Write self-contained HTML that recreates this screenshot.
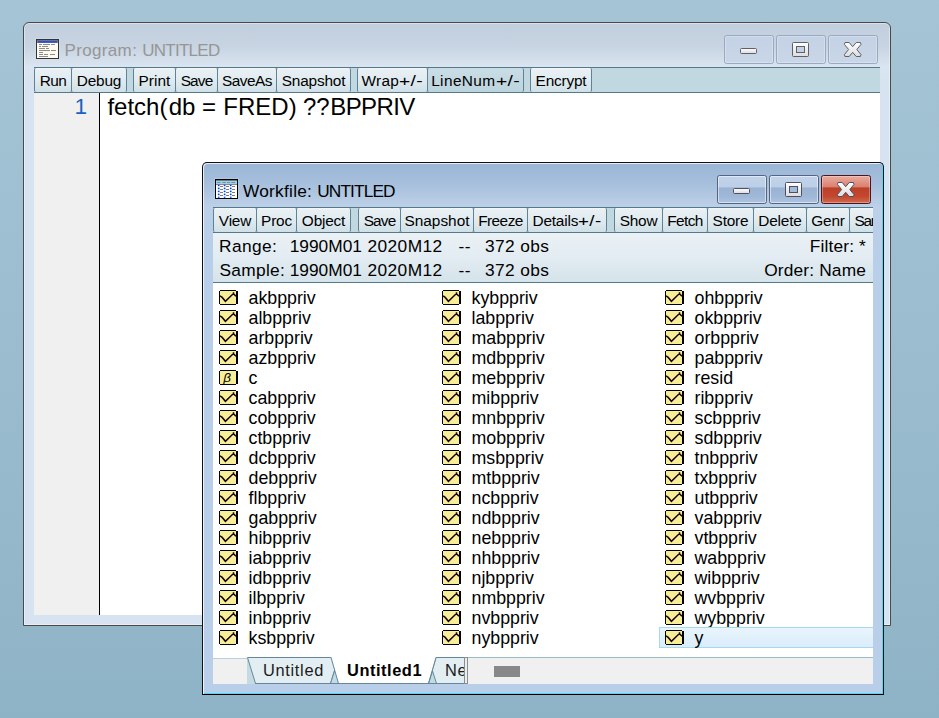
<!DOCTYPE html>
<html><head><meta charset="utf-8"><title>EViews</title>
<style>
html,body{margin:0;padding:0}
body{width:939px;height:718px;overflow:hidden;position:relative;background:linear-gradient(#a5c5d6,#8fb3c6);font-family:"Liberation Sans",Arial,sans-serif;color:#000}
.abs{position:absolute}
.win{position:absolute;box-sizing:border-box;border:1px solid #4a4a4a;border-radius:7px 7px 0 0}
#pw{left:23px;top:22px;width:868px;height:604px;border-radius:6px 6px 0 0;box-shadow:inset 0 0 0 1px rgba(255,255,255,.4);background:linear-gradient(#c1cedd 0,#c8d4e2 24px,#dae5f0 44px,#d7e3f0 60px,#d7e3f0 100%)}
#ww{left:202px;top:162px;width:682px;height:533px;border-color:#111;border-radius:5px 5px 0 0;box-shadow:inset 1px 1px 0 rgba(255,255,255,.75),inset -1px -1px 0 #4fd6f2;background:linear-gradient(#9ab5d6 0,#a6bfdc 20px,#bdd0e8 44px,#b9cfe9 60px,#b9cfe9 100%);border-bottom:1px solid #000}
.title{position:absolute;font-size:17px;letter-spacing:-0.22px;white-space:pre;line-height:20px}
.tbar{position:absolute;box-sizing:border-box;background:#c1d8e0;border-top:1px solid #527a8b;border-bottom:1px solid #527a8b;overflow:hidden}
.tb{position:absolute;box-sizing:border-box;border:1px solid #5d8395;border-top:none;border-bottom:none;border-radius:2px;background:linear-gradient(#f4f8fa,#e9f0f4 8%,#e0ebf0 50%,#d0e0e7);font-size:15.400px;letter-spacing:-.2px;line-height:25.400px;text-align:center;white-space:pre;margin-left:0}
.tb.on{background:linear-gradient(#c9dde5,#bcd4dd)}
.tb.clipl{text-align:left;padding-left:4.500px;letter-spacing:-1.300px}
.cb{position:absolute;box-sizing:border-box;border:1px solid #9aa8c3;border-radius:2.500px;background:linear-gradient(#c4d2e5,#c9d6e8);box-shadow:inset 0 0 0 1px rgba(255,255,255,.25)}
.cb.a{border-color:#566480;background:linear-gradient(#c0d3ea 0,#bccfe7 42%,#9bb2d2 43%,#a0b8d7 75%,#acc4e1 100%);box-shadow:inset 0 0 0 1px rgba(255,255,255,.5)}
.cb.x{border-color:#4b1622;background:linear-gradient(#eaac9e 0,#d97f6e 42%,#bc4028 43%,#c2472e 75%,#d06a4c 100%);box-shadow:inset 0 0 0 1px rgba(255,255,255,.3)}
.it{position:absolute;height:20px;width:214px;font-size:17.8px;line-height:20px;white-space:pre}
.it .ic{position:absolute;left:6px;top:2px}
.it span{position:absolute;left:35.5px;top:0}
.it.sel{box-sizing:border-box;border:1px solid #a6d8f0;background:linear-gradient(#e9f5fd,#d9edfa);margin-top:-1px;height:21px;width:216px}
.it.sel .ic{left:5px;top:2px}
.it.sel span{left:34.5px;top:0}
.info{position:absolute;font-size:17.33px;line-height:20px;white-space:pre}
.code span{position:relative}
.pm{display:inline-block;transform:scaleX(1.25);transform-origin:0 50%;letter-spacing:.3px;margin-right:5px}
.tab{position:absolute;font-size:16.4px;line-height:20px;white-space:pre}
</style></head><body>

<!-- Program window -->
<div class="win" id="pw"></div>
<svg class="abs" style="left:35px;top:38px" width="25" height="22" viewBox="-1 -1 25 22"><rect x="-0.500" y="-0.500" width="24" height="21" fill="none" stroke="#d3e1f0" stroke-opacity=".5"/><rect x="0.500" y="0.500" width="22" height="19" fill="#fffaf0" stroke="#333"/><rect x="1" y="1" width="21" height="1" fill="#7a7468"/><rect x="1" y="2" width="21" height="2" fill="#7f8088"/><rect x="2" y="2" width="19" height="1.700" fill="#1f4ff0"/><path d="M3 5.500h3M7 5.500h7M15 5.500h4M3 7.500h2M6 7.500h6M3 9.500h6M10 9.500h3M3 11.500h11M15 11.500h5M3 13.500h4M3 15.500h4M8 15.500h4M14 15.500h5M3 17.500h9" stroke="#8c8c8c" stroke-width="1"/></svg>
<div class="title" style="left:64.5px;top:41px;color:#969696"><span style="letter-spacing:.35px">Program: </span><span style="letter-spacing:-.75px">UNTITLED</span></div>
<div class="cb" style="left:724px;top:35px;width:50px;height:29px"></div>
<div class="cb" style="left:776px;top:35px;width:50px;height:29px"></div>
<div class="cb" style="left:828px;top:35px;width:50px;height:29px"></div>
<svg class="abs" style="left:724px;top:35px" width="154" height="29" viewBox="0 0 154 29">
<linearGradient id="g1" x1="0" y1="0" x2="0" y2="1"><stop offset="0" stop-color="#fff"/><stop offset="1" stop-color="#dcdcdc"/></linearGradient>
<rect x="16.500" y="13.500" width="16" height="5" rx="1" fill="url(#g1)" stroke="#5f6068"/>
<g transform="translate(52 0)"><rect x="16.500" y="7.500" width="16" height="14" rx="1" fill="url(#g1)" stroke="#5f6068"/><rect x="20.500" y="11.500" width="8" height="6" fill="#c3d1e4" stroke="#5f6068"/></g>
<g transform="translate(104 0)"><path d="M17 7.500H21.200L24.700 11.700L28.200 7.500H32.400L33 9.400L28.800 14.500L33 19.600L32.400 21.500H28.200L24.700 17.300L21.200 21.500H17L16.400 19.600L20.600 14.500L16.400 9.400Z" fill="url(#g1)" stroke="#5f6068" stroke-linejoin="round"/></g>
</svg>
<div class="tbar" style="left:34px;top:67px;width:846px;height:26px"></div>
<div class="tb" style="left:34px;width:38px;top:68px;height:24px"><span style="letter-spacing:-0.6px">Run</span></div>
<div class="tb" style="left:71px;width:56px;top:68px;height:24px">Debug</div>
<div class="tb" style="left:133px;width:43px;top:68px;height:24px"><span style="letter-spacing:0.05px">Print</span></div>
<div class="tb" style="left:175px;width:43px;top:68px;height:24px"><span style="letter-spacing:-0.85px">Save</span></div>
<div class="tb" style="left:217px;width:60px;top:68px;height:24px"><span style="letter-spacing:-0.5px">SaveAs</span></div>
<div class="tb" style="left:276px;width:75px;top:68px;height:24px">Snapshot</div>
<div class="tb" style="left:357px;width:71px;top:68px;height:24px"><span style="letter-spacing:0.3px">Wrap</span><span class="pm">+/-</span></div>
<div class="tb on" style="left:427px;width:97px;top:68px;height:24px"><span style="letter-spacing:0.4px">LineNum</span><span class="pm">+/-</span></div>
<div class="tb" style="left:530px;width:62px;top:68px;height:24px">Encrypt</div>
<div class="abs" style="left:34px;top:93px;width:846px;height:522px;background:#fff"></div>
<div class="abs" style="left:34px;top:93px;width:65px;height:522px;background:#f0f0f0"></div>
<div class="abs" style="left:99px;top:93px;width:1px;height:522px;background:#000"></div>
<div class="abs" style="left:34px;top:94px;width:53px;height:24px;line-height:25px;font-size:22.6px;color:#1b62c0;text-align:right">1</div>
<div class="abs code" style="left:106px;top:94px;height:26px;line-height:26px;font-size:24px;white-space:pre"><span style="left:1.4px">fetch(</span><span style="left:2.7px">db</span> <span style="left:2.6px">=</span> <span style="left:3.25px">FRED)</span> <span style="left:2.8px">??</span><span style="left:3.45px;letter-spacing:-.6px">BPPRIV</span></div>

<!-- Workfile window -->
<div class="win" id="ww"></div>
<svg class="abs" style="left:214px;top:178px" width="25" height="22" viewBox="-1 -1 25 22"><rect x="-0.500" y="-0.500" width="24" height="21" fill="none" stroke="#b9d3ee" stroke-opacity=".5"/><rect x="0.500" y="0.500" width="22" height="19" fill="#fffdf5" stroke="#000"/><rect x="1" y="1" width="21" height="1" fill="#807870"/><rect x="1" y="2" width="21" height="3" fill="#8fd8fa"/><rect x="1" y="5" width="21" height="1" fill="#8a8a8a"/><path d="M2 3.500h3.500M7.300 3.500h3.500M12 3.500h3M16.300 3.500h3.700" stroke="#8a8a8a"/><path d="M3.700 6v13M9.600 6v13M15.700 6v13" stroke="#bfe6ff" stroke-width="1.500"/><path d="M3.700 5.700v13M9.600 5.700v13M15.700 5.700v13" stroke="#0a3cff" stroke-width="1.600" stroke-dasharray="1.400 1.600"/><path d="M5 7.500h3M11 7.500h3M17 7.500h3M5 10.500h3M11 10.500h3M17 10.500h3M5 13.500h3M11 13.500h3M17 13.500h3M5 16.500h3M11 16.500h3M17 16.500h3" stroke="#7c7c7c"/></svg>
<div class="title" style="left:243px;top:181px;font-size:17.3px"><span style="letter-spacing:.25px">Workfile: </span><span style="letter-spacing:-.88px">UNTITLED</span></div>
<div class="cb a" style="left:717px;top:175px;width:50px;height:29px"></div>
<div class="cb a" style="left:769px;top:175px;width:50px;height:29px"></div>
<div class="cb x" style="left:821px;top:175px;width:50px;height:29px"></div>
<svg class="abs" style="left:717px;top:175px" width="154" height="29" viewBox="0 0 154 29">
<linearGradient id="g2" x1="0" y1="0" x2="0" y2="1"><stop offset="0" stop-color="#fff"/><stop offset="1" stop-color="#dcdcdc"/></linearGradient>
<rect x="16.500" y="13.500" width="16" height="5" rx="1" fill="url(#g2)" stroke="#4d4f62"/>
<g transform="translate(52 0)"><rect x="16.500" y="7.500" width="16" height="14" rx="1" fill="url(#g2)" stroke="#4d4f62"/><rect x="20.500" y="11.500" width="8" height="6" fill="#a3bad8" stroke="#4d4f62"/></g>
<g transform="translate(104 0)"><path d="M17 7.500H21.200L24.700 11.700L28.200 7.500H32.400L33 9.400L28.800 14.500L33 19.600L32.400 21.500H28.200L24.700 17.300L21.200 21.500H17L16.400 19.600L20.600 14.500L16.400 9.400Z" fill="url(#g2)" stroke="#4d4f62" stroke-linejoin="round"/></g>
</svg>
<div class="tbar" style="left:213px;top:207px;width:660px;height:26px"></div>
<div class="abs" style="left:213px;top:208px;width:660px;height:24px;overflow:hidden"><div class="abs" style="left:-213px;top:-208px">
<div class="tb" style="left:213px;width:44px;top:208px;height:24px">View</div>
<div class="tb" style="left:256px;width:41px;top:208px;height:24px">Proc</div>
<div class="tb" style="left:296px;width:55px;top:208px;height:24px">Object</div>
<div class="tb" style="left:358px;width:43px;top:208px;height:24px"><span style="letter-spacing:-0.85px">Save</span></div>
<div class="tb" style="left:400px;width:74px;top:208px;height:24px"><span style="letter-spacing:0px">Snapshot</span></div>
<div class="tb" style="left:473px;width:55px;top:208px;height:24px"><span style="letter-spacing:-0.55px">Freeze</span></div>
<div class="tb" style="left:527px;width:80px;top:208px;height:24px">Details<span class="pm" style="transform:scaleX(1.22);margin-right:4px">+/-</span></div>
<div class="tb" style="left:614px;width:49px;top:208px;height:24px">Show</div>
<div class="tb" style="left:662px;width:46px;top:208px;height:24px"><span style="letter-spacing:-0.6px">Fetch</span></div>
<div class="tb" style="left:707px;width:47px;top:208px;height:24px">Store</div>
<div class="tb" style="left:753px;width:54px;top:208px;height:24px">Delete</div>
<div class="tb" style="left:806px;width:44px;top:208px;height:24px">Genr</div>
<div class="tb clipl" style="left:849px;width:57px;top:208px;height:24px">Sample</div>
</div></div>
<div class="abs" style="left:213px;top:233px;width:660px;height:50px;box-sizing:border-box;background:linear-gradient(#ebf1f5,#e2ecf2 50%,#d5e3ea);border-bottom:1px solid #557a8b"></div>
<div class="info" style="left:219px;top:236px;letter-spacing:.4px">Range:</div>
<div class="info" style="left:289.700px;top:236px">1990M01</div>
<div class="info" style="left:367.500px;top:236px;letter-spacing:.4px">2020M12</div>
<div class="info" style="left:458.500px;top:236px;letter-spacing:.5px">--</div>
<div class="info" style="left:485px;top:236px;letter-spacing:.38px">372 obs</div>
<div class="info" style="right:73px;top:236px;letter-spacing:.15px">Filter: *</div>
<div class="info" style="left:219.500px;top:260px;letter-spacing:.3px">Sample:</div>
<div class="info" style="left:289.700px;top:260px">1990M01</div>
<div class="info" style="left:367.500px;top:260px;letter-spacing:.4px">2020M12</div>
<div class="info" style="left:458.500px;top:260px;letter-spacing:.5px">--</div>
<div class="info" style="left:485px;top:260px;letter-spacing:.38px">372 obs</div>
<div class="info" style="right:73px;top:260px;letter-spacing:.15px">Order: Name</div>
<div class="abs" style="left:213px;top:283px;width:660px;height:375px;background:#fff"></div>
<div class="abs" style="left:213px;top:283px;width:660px;height:375px;overflow:hidden"><div class="abs" style="left:-213px;top:-283px">
<div class="it" style="left:213px;top:288px"><svg class="ic" width="19" height="15" viewBox="0 0 19 15"><path d="M1 0h16v1h2v13h-2v1H1v-1H0V1h1z" fill="#000"/><rect x="1" y="1" width="16" height="13" fill="#f9ee98"/><path d="M1 5.800L3.200 7.400L6.400 11.300L12.900 5L14.500 3.700L17 6.300M14.500 2.300V4" fill="none" stroke="#160404" stroke-width="1.500"/></svg><span>akbppriv</span></div>
<div class="it" style="left:213px;top:308px"><svg class="ic" width="19" height="15" viewBox="0 0 19 15"><path d="M1 0h16v1h2v13h-2v1H1v-1H0V1h1z" fill="#000"/><rect x="1" y="1" width="16" height="13" fill="#f9ee98"/><path d="M1 5.800L3.200 7.400L6.400 11.300L12.900 5L14.500 3.700L17 6.300M14.500 2.300V4" fill="none" stroke="#160404" stroke-width="1.500"/></svg><span>albppriv</span></div>
<div class="it" style="left:213px;top:328px"><svg class="ic" width="19" height="15" viewBox="0 0 19 15"><path d="M1 0h16v1h2v13h-2v1H1v-1H0V1h1z" fill="#000"/><rect x="1" y="1" width="16" height="13" fill="#f9ee98"/><path d="M1 5.800L3.200 7.400L6.400 11.300L12.900 5L14.500 3.700L17 6.300M14.500 2.300V4" fill="none" stroke="#160404" stroke-width="1.500"/></svg><span>arbppriv</span></div>
<div class="it" style="left:213px;top:348px"><svg class="ic" width="19" height="15" viewBox="0 0 19 15"><path d="M1 0h16v1h2v13h-2v1H1v-1H0V1h1z" fill="#000"/><rect x="1" y="1" width="16" height="13" fill="#f9ee98"/><path d="M1 5.800L3.200 7.400L6.400 11.300L12.900 5L14.500 3.700L17 6.300M14.500 2.300V4" fill="none" stroke="#160404" stroke-width="1.500"/></svg><span>azbppriv</span></div>
<div class="it" style="left:213px;top:368px"><svg class="ic" width="19" height="15" viewBox="0 0 19 15"><path d="M1 0h16v1h2v13h-2v1H1v-1H0V1h1z" fill="#000"/><rect x="1" y="1" width="16" height="13" fill="#f9ee98"/><text x="4.300" y="12" font-family="Liberation Sans, sans-serif" font-style="italic" font-size="13.500" fill="#000">β</text></svg><span>c</span></div>
<div class="it" style="left:213px;top:388px"><svg class="ic" width="19" height="15" viewBox="0 0 19 15"><path d="M1 0h16v1h2v13h-2v1H1v-1H0V1h1z" fill="#000"/><rect x="1" y="1" width="16" height="13" fill="#f9ee98"/><path d="M1 5.800L3.200 7.400L6.400 11.300L12.900 5L14.500 3.700L17 6.300M14.500 2.300V4" fill="none" stroke="#160404" stroke-width="1.500"/></svg><span>cabppriv</span></div>
<div class="it" style="left:213px;top:408px"><svg class="ic" width="19" height="15" viewBox="0 0 19 15"><path d="M1 0h16v1h2v13h-2v1H1v-1H0V1h1z" fill="#000"/><rect x="1" y="1" width="16" height="13" fill="#f9ee98"/><path d="M1 5.800L3.200 7.400L6.400 11.300L12.900 5L14.500 3.700L17 6.300M14.500 2.300V4" fill="none" stroke="#160404" stroke-width="1.500"/></svg><span>cobppriv</span></div>
<div class="it" style="left:213px;top:428px"><svg class="ic" width="19" height="15" viewBox="0 0 19 15"><path d="M1 0h16v1h2v13h-2v1H1v-1H0V1h1z" fill="#000"/><rect x="1" y="1" width="16" height="13" fill="#f9ee98"/><path d="M1 5.800L3.200 7.400L6.400 11.300L12.900 5L14.500 3.700L17 6.300M14.500 2.300V4" fill="none" stroke="#160404" stroke-width="1.500"/></svg><span>ctbppriv</span></div>
<div class="it" style="left:213px;top:448px"><svg class="ic" width="19" height="15" viewBox="0 0 19 15"><path d="M1 0h16v1h2v13h-2v1H1v-1H0V1h1z" fill="#000"/><rect x="1" y="1" width="16" height="13" fill="#f9ee98"/><path d="M1 5.800L3.200 7.400L6.400 11.300L12.900 5L14.500 3.700L17 6.300M14.500 2.300V4" fill="none" stroke="#160404" stroke-width="1.500"/></svg><span>dcbppriv</span></div>
<div class="it" style="left:213px;top:468px"><svg class="ic" width="19" height="15" viewBox="0 0 19 15"><path d="M1 0h16v1h2v13h-2v1H1v-1H0V1h1z" fill="#000"/><rect x="1" y="1" width="16" height="13" fill="#f9ee98"/><path d="M1 5.800L3.200 7.400L6.400 11.300L12.900 5L14.500 3.700L17 6.300M14.500 2.300V4" fill="none" stroke="#160404" stroke-width="1.500"/></svg><span>debppriv</span></div>
<div class="it" style="left:213px;top:488px"><svg class="ic" width="19" height="15" viewBox="0 0 19 15"><path d="M1 0h16v1h2v13h-2v1H1v-1H0V1h1z" fill="#000"/><rect x="1" y="1" width="16" height="13" fill="#f9ee98"/><path d="M1 5.800L3.200 7.400L6.400 11.300L12.900 5L14.500 3.700L17 6.300M14.500 2.300V4" fill="none" stroke="#160404" stroke-width="1.500"/></svg><span>flbppriv</span></div>
<div class="it" style="left:213px;top:508px"><svg class="ic" width="19" height="15" viewBox="0 0 19 15"><path d="M1 0h16v1h2v13h-2v1H1v-1H0V1h1z" fill="#000"/><rect x="1" y="1" width="16" height="13" fill="#f9ee98"/><path d="M1 5.800L3.200 7.400L6.400 11.300L12.900 5L14.500 3.700L17 6.300M14.500 2.300V4" fill="none" stroke="#160404" stroke-width="1.500"/></svg><span>gabppriv</span></div>
<div class="it" style="left:213px;top:528px"><svg class="ic" width="19" height="15" viewBox="0 0 19 15"><path d="M1 0h16v1h2v13h-2v1H1v-1H0V1h1z" fill="#000"/><rect x="1" y="1" width="16" height="13" fill="#f9ee98"/><path d="M1 5.800L3.200 7.400L6.400 11.300L12.900 5L14.500 3.700L17 6.300M14.500 2.300V4" fill="none" stroke="#160404" stroke-width="1.500"/></svg><span>hibppriv</span></div>
<div class="it" style="left:213px;top:548px"><svg class="ic" width="19" height="15" viewBox="0 0 19 15"><path d="M1 0h16v1h2v13h-2v1H1v-1H0V1h1z" fill="#000"/><rect x="1" y="1" width="16" height="13" fill="#f9ee98"/><path d="M1 5.800L3.200 7.400L6.400 11.300L12.900 5L14.500 3.700L17 6.300M14.500 2.300V4" fill="none" stroke="#160404" stroke-width="1.500"/></svg><span>iabppriv</span></div>
<div class="it" style="left:213px;top:568px"><svg class="ic" width="19" height="15" viewBox="0 0 19 15"><path d="M1 0h16v1h2v13h-2v1H1v-1H0V1h1z" fill="#000"/><rect x="1" y="1" width="16" height="13" fill="#f9ee98"/><path d="M1 5.800L3.200 7.400L6.400 11.300L12.900 5L14.500 3.700L17 6.300M14.500 2.300V4" fill="none" stroke="#160404" stroke-width="1.500"/></svg><span>idbppriv</span></div>
<div class="it" style="left:213px;top:588px"><svg class="ic" width="19" height="15" viewBox="0 0 19 15"><path d="M1 0h16v1h2v13h-2v1H1v-1H0V1h1z" fill="#000"/><rect x="1" y="1" width="16" height="13" fill="#f9ee98"/><path d="M1 5.800L3.200 7.400L6.400 11.300L12.900 5L14.500 3.700L17 6.300M14.500 2.300V4" fill="none" stroke="#160404" stroke-width="1.500"/></svg><span>ilbppriv</span></div>
<div class="it" style="left:213px;top:608px"><svg class="ic" width="19" height="15" viewBox="0 0 19 15"><path d="M1 0h16v1h2v13h-2v1H1v-1H0V1h1z" fill="#000"/><rect x="1" y="1" width="16" height="13" fill="#f9ee98"/><path d="M1 5.800L3.200 7.400L6.400 11.300L12.900 5L14.500 3.700L17 6.300M14.500 2.300V4" fill="none" stroke="#160404" stroke-width="1.500"/></svg><span>inbppriv</span></div>
<div class="it" style="left:213px;top:628px"><svg class="ic" width="19" height="15" viewBox="0 0 19 15"><path d="M1 0h16v1h2v13h-2v1H1v-1H0V1h1z" fill="#000"/><rect x="1" y="1" width="16" height="13" fill="#f9ee98"/><path d="M1 5.800L3.200 7.400L6.400 11.300L12.900 5L14.500 3.700L17 6.300M14.500 2.300V4" fill="none" stroke="#160404" stroke-width="1.500"/></svg><span>ksbppriv</span></div>
<div class="it" style="left:436px;top:288px"><svg class="ic" width="19" height="15" viewBox="0 0 19 15"><path d="M1 0h16v1h2v13h-2v1H1v-1H0V1h1z" fill="#000"/><rect x="1" y="1" width="16" height="13" fill="#f9ee98"/><path d="M1 5.800L3.200 7.400L6.400 11.300L12.900 5L14.500 3.700L17 6.300M14.500 2.300V4" fill="none" stroke="#160404" stroke-width="1.500"/></svg><span>kybppriv</span></div>
<div class="it" style="left:436px;top:308px"><svg class="ic" width="19" height="15" viewBox="0 0 19 15"><path d="M1 0h16v1h2v13h-2v1H1v-1H0V1h1z" fill="#000"/><rect x="1" y="1" width="16" height="13" fill="#f9ee98"/><path d="M1 5.800L3.200 7.400L6.400 11.300L12.900 5L14.500 3.700L17 6.300M14.500 2.300V4" fill="none" stroke="#160404" stroke-width="1.500"/></svg><span>labppriv</span></div>
<div class="it" style="left:436px;top:328px"><svg class="ic" width="19" height="15" viewBox="0 0 19 15"><path d="M1 0h16v1h2v13h-2v1H1v-1H0V1h1z" fill="#000"/><rect x="1" y="1" width="16" height="13" fill="#f9ee98"/><path d="M1 5.800L3.200 7.400L6.400 11.300L12.900 5L14.500 3.700L17 6.300M14.500 2.300V4" fill="none" stroke="#160404" stroke-width="1.500"/></svg><span>mabppriv</span></div>
<div class="it" style="left:436px;top:348px"><svg class="ic" width="19" height="15" viewBox="0 0 19 15"><path d="M1 0h16v1h2v13h-2v1H1v-1H0V1h1z" fill="#000"/><rect x="1" y="1" width="16" height="13" fill="#f9ee98"/><path d="M1 5.800L3.200 7.400L6.400 11.300L12.900 5L14.500 3.700L17 6.300M14.500 2.300V4" fill="none" stroke="#160404" stroke-width="1.500"/></svg><span>mdbppriv</span></div>
<div class="it" style="left:436px;top:368px"><svg class="ic" width="19" height="15" viewBox="0 0 19 15"><path d="M1 0h16v1h2v13h-2v1H1v-1H0V1h1z" fill="#000"/><rect x="1" y="1" width="16" height="13" fill="#f9ee98"/><path d="M1 5.800L3.200 7.400L6.400 11.300L12.900 5L14.500 3.700L17 6.300M14.500 2.300V4" fill="none" stroke="#160404" stroke-width="1.500"/></svg><span>mebppriv</span></div>
<div class="it" style="left:436px;top:388px"><svg class="ic" width="19" height="15" viewBox="0 0 19 15"><path d="M1 0h16v1h2v13h-2v1H1v-1H0V1h1z" fill="#000"/><rect x="1" y="1" width="16" height="13" fill="#f9ee98"/><path d="M1 5.800L3.200 7.400L6.400 11.300L12.900 5L14.500 3.700L17 6.300M14.500 2.300V4" fill="none" stroke="#160404" stroke-width="1.500"/></svg><span>mibppriv</span></div>
<div class="it" style="left:436px;top:408px"><svg class="ic" width="19" height="15" viewBox="0 0 19 15"><path d="M1 0h16v1h2v13h-2v1H1v-1H0V1h1z" fill="#000"/><rect x="1" y="1" width="16" height="13" fill="#f9ee98"/><path d="M1 5.800L3.200 7.400L6.400 11.300L12.900 5L14.500 3.700L17 6.300M14.500 2.300V4" fill="none" stroke="#160404" stroke-width="1.500"/></svg><span>mnbppriv</span></div>
<div class="it" style="left:436px;top:428px"><svg class="ic" width="19" height="15" viewBox="0 0 19 15"><path d="M1 0h16v1h2v13h-2v1H1v-1H0V1h1z" fill="#000"/><rect x="1" y="1" width="16" height="13" fill="#f9ee98"/><path d="M1 5.800L3.200 7.400L6.400 11.300L12.900 5L14.500 3.700L17 6.300M14.500 2.300V4" fill="none" stroke="#160404" stroke-width="1.500"/></svg><span>mobppriv</span></div>
<div class="it" style="left:436px;top:448px"><svg class="ic" width="19" height="15" viewBox="0 0 19 15"><path d="M1 0h16v1h2v13h-2v1H1v-1H0V1h1z" fill="#000"/><rect x="1" y="1" width="16" height="13" fill="#f9ee98"/><path d="M1 5.800L3.200 7.400L6.400 11.300L12.900 5L14.500 3.700L17 6.300M14.500 2.300V4" fill="none" stroke="#160404" stroke-width="1.500"/></svg><span>msbppriv</span></div>
<div class="it" style="left:436px;top:468px"><svg class="ic" width="19" height="15" viewBox="0 0 19 15"><path d="M1 0h16v1h2v13h-2v1H1v-1H0V1h1z" fill="#000"/><rect x="1" y="1" width="16" height="13" fill="#f9ee98"/><path d="M1 5.800L3.200 7.400L6.400 11.300L12.900 5L14.500 3.700L17 6.300M14.500 2.300V4" fill="none" stroke="#160404" stroke-width="1.500"/></svg><span>mtbppriv</span></div>
<div class="it" style="left:436px;top:488px"><svg class="ic" width="19" height="15" viewBox="0 0 19 15"><path d="M1 0h16v1h2v13h-2v1H1v-1H0V1h1z" fill="#000"/><rect x="1" y="1" width="16" height="13" fill="#f9ee98"/><path d="M1 5.800L3.200 7.400L6.400 11.300L12.900 5L14.500 3.700L17 6.300M14.500 2.300V4" fill="none" stroke="#160404" stroke-width="1.500"/></svg><span>ncbppriv</span></div>
<div class="it" style="left:436px;top:508px"><svg class="ic" width="19" height="15" viewBox="0 0 19 15"><path d="M1 0h16v1h2v13h-2v1H1v-1H0V1h1z" fill="#000"/><rect x="1" y="1" width="16" height="13" fill="#f9ee98"/><path d="M1 5.800L3.200 7.400L6.400 11.300L12.900 5L14.500 3.700L17 6.300M14.500 2.300V4" fill="none" stroke="#160404" stroke-width="1.500"/></svg><span>ndbppriv</span></div>
<div class="it" style="left:436px;top:528px"><svg class="ic" width="19" height="15" viewBox="0 0 19 15"><path d="M1 0h16v1h2v13h-2v1H1v-1H0V1h1z" fill="#000"/><rect x="1" y="1" width="16" height="13" fill="#f9ee98"/><path d="M1 5.800L3.200 7.400L6.400 11.300L12.900 5L14.500 3.700L17 6.300M14.500 2.300V4" fill="none" stroke="#160404" stroke-width="1.500"/></svg><span>nebppriv</span></div>
<div class="it" style="left:436px;top:548px"><svg class="ic" width="19" height="15" viewBox="0 0 19 15"><path d="M1 0h16v1h2v13h-2v1H1v-1H0V1h1z" fill="#000"/><rect x="1" y="1" width="16" height="13" fill="#f9ee98"/><path d="M1 5.800L3.200 7.400L6.400 11.300L12.900 5L14.500 3.700L17 6.300M14.500 2.300V4" fill="none" stroke="#160404" stroke-width="1.500"/></svg><span>nhbppriv</span></div>
<div class="it" style="left:436px;top:568px"><svg class="ic" width="19" height="15" viewBox="0 0 19 15"><path d="M1 0h16v1h2v13h-2v1H1v-1H0V1h1z" fill="#000"/><rect x="1" y="1" width="16" height="13" fill="#f9ee98"/><path d="M1 5.800L3.200 7.400L6.400 11.300L12.900 5L14.500 3.700L17 6.300M14.500 2.300V4" fill="none" stroke="#160404" stroke-width="1.500"/></svg><span>njbppriv</span></div>
<div class="it" style="left:436px;top:588px"><svg class="ic" width="19" height="15" viewBox="0 0 19 15"><path d="M1 0h16v1h2v13h-2v1H1v-1H0V1h1z" fill="#000"/><rect x="1" y="1" width="16" height="13" fill="#f9ee98"/><path d="M1 5.800L3.200 7.400L6.400 11.300L12.900 5L14.500 3.700L17 6.300M14.500 2.300V4" fill="none" stroke="#160404" stroke-width="1.500"/></svg><span>nmbppriv</span></div>
<div class="it" style="left:436px;top:608px"><svg class="ic" width="19" height="15" viewBox="0 0 19 15"><path d="M1 0h16v1h2v13h-2v1H1v-1H0V1h1z" fill="#000"/><rect x="1" y="1" width="16" height="13" fill="#f9ee98"/><path d="M1 5.800L3.200 7.400L6.400 11.300L12.900 5L14.500 3.700L17 6.300M14.500 2.300V4" fill="none" stroke="#160404" stroke-width="1.500"/></svg><span>nvbppriv</span></div>
<div class="it" style="left:436px;top:628px"><svg class="ic" width="19" height="15" viewBox="0 0 19 15"><path d="M1 0h16v1h2v13h-2v1H1v-1H0V1h1z" fill="#000"/><rect x="1" y="1" width="16" height="13" fill="#f9ee98"/><path d="M1 5.800L3.200 7.400L6.400 11.300L12.900 5L14.500 3.700L17 6.300M14.500 2.300V4" fill="none" stroke="#160404" stroke-width="1.500"/></svg><span>nybppriv</span></div>
<div class="it" style="left:659px;top:288px"><svg class="ic" width="19" height="15" viewBox="0 0 19 15"><path d="M1 0h16v1h2v13h-2v1H1v-1H0V1h1z" fill="#000"/><rect x="1" y="1" width="16" height="13" fill="#f9ee98"/><path d="M1 5.800L3.200 7.400L6.400 11.300L12.900 5L14.500 3.700L17 6.300M14.500 2.300V4" fill="none" stroke="#160404" stroke-width="1.500"/></svg><span>ohbppriv</span></div>
<div class="it" style="left:659px;top:308px"><svg class="ic" width="19" height="15" viewBox="0 0 19 15"><path d="M1 0h16v1h2v13h-2v1H1v-1H0V1h1z" fill="#000"/><rect x="1" y="1" width="16" height="13" fill="#f9ee98"/><path d="M1 5.800L3.200 7.400L6.400 11.300L12.900 5L14.500 3.700L17 6.300M14.500 2.300V4" fill="none" stroke="#160404" stroke-width="1.500"/></svg><span>okbppriv</span></div>
<div class="it" style="left:659px;top:328px"><svg class="ic" width="19" height="15" viewBox="0 0 19 15"><path d="M1 0h16v1h2v13h-2v1H1v-1H0V1h1z" fill="#000"/><rect x="1" y="1" width="16" height="13" fill="#f9ee98"/><path d="M1 5.800L3.200 7.400L6.400 11.300L12.900 5L14.500 3.700L17 6.300M14.500 2.300V4" fill="none" stroke="#160404" stroke-width="1.500"/></svg><span>orbppriv</span></div>
<div class="it" style="left:659px;top:348px"><svg class="ic" width="19" height="15" viewBox="0 0 19 15"><path d="M1 0h16v1h2v13h-2v1H1v-1H0V1h1z" fill="#000"/><rect x="1" y="1" width="16" height="13" fill="#f9ee98"/><path d="M1 5.800L3.200 7.400L6.400 11.300L12.900 5L14.500 3.700L17 6.300M14.500 2.300V4" fill="none" stroke="#160404" stroke-width="1.500"/></svg><span>pabppriv</span></div>
<div class="it" style="left:659px;top:368px"><svg class="ic" width="19" height="15" viewBox="0 0 19 15"><path d="M1 0h16v1h2v13h-2v1H1v-1H0V1h1z" fill="#000"/><rect x="1" y="1" width="16" height="13" fill="#f9ee98"/><path d="M1 5.800L3.200 7.400L6.400 11.300L12.900 5L14.500 3.700L17 6.300M14.500 2.300V4" fill="none" stroke="#160404" stroke-width="1.500"/></svg><span>resid</span></div>
<div class="it" style="left:659px;top:388px"><svg class="ic" width="19" height="15" viewBox="0 0 19 15"><path d="M1 0h16v1h2v13h-2v1H1v-1H0V1h1z" fill="#000"/><rect x="1" y="1" width="16" height="13" fill="#f9ee98"/><path d="M1 5.800L3.200 7.400L6.400 11.300L12.900 5L14.500 3.700L17 6.300M14.500 2.300V4" fill="none" stroke="#160404" stroke-width="1.500"/></svg><span>ribppriv</span></div>
<div class="it" style="left:659px;top:408px"><svg class="ic" width="19" height="15" viewBox="0 0 19 15"><path d="M1 0h16v1h2v13h-2v1H1v-1H0V1h1z" fill="#000"/><rect x="1" y="1" width="16" height="13" fill="#f9ee98"/><path d="M1 5.800L3.200 7.400L6.400 11.300L12.900 5L14.500 3.700L17 6.300M14.500 2.300V4" fill="none" stroke="#160404" stroke-width="1.500"/></svg><span>scbppriv</span></div>
<div class="it" style="left:659px;top:428px"><svg class="ic" width="19" height="15" viewBox="0 0 19 15"><path d="M1 0h16v1h2v13h-2v1H1v-1H0V1h1z" fill="#000"/><rect x="1" y="1" width="16" height="13" fill="#f9ee98"/><path d="M1 5.800L3.200 7.400L6.400 11.300L12.900 5L14.500 3.700L17 6.300M14.500 2.300V4" fill="none" stroke="#160404" stroke-width="1.500"/></svg><span>sdbppriv</span></div>
<div class="it" style="left:659px;top:448px"><svg class="ic" width="19" height="15" viewBox="0 0 19 15"><path d="M1 0h16v1h2v13h-2v1H1v-1H0V1h1z" fill="#000"/><rect x="1" y="1" width="16" height="13" fill="#f9ee98"/><path d="M1 5.800L3.200 7.400L6.400 11.300L12.900 5L14.500 3.700L17 6.300M14.500 2.300V4" fill="none" stroke="#160404" stroke-width="1.500"/></svg><span>tnbppriv</span></div>
<div class="it" style="left:659px;top:468px"><svg class="ic" width="19" height="15" viewBox="0 0 19 15"><path d="M1 0h16v1h2v13h-2v1H1v-1H0V1h1z" fill="#000"/><rect x="1" y="1" width="16" height="13" fill="#f9ee98"/><path d="M1 5.800L3.200 7.400L6.400 11.300L12.900 5L14.500 3.700L17 6.300M14.500 2.300V4" fill="none" stroke="#160404" stroke-width="1.500"/></svg><span>txbppriv</span></div>
<div class="it" style="left:659px;top:488px"><svg class="ic" width="19" height="15" viewBox="0 0 19 15"><path d="M1 0h16v1h2v13h-2v1H1v-1H0V1h1z" fill="#000"/><rect x="1" y="1" width="16" height="13" fill="#f9ee98"/><path d="M1 5.800L3.200 7.400L6.400 11.300L12.900 5L14.500 3.700L17 6.300M14.500 2.300V4" fill="none" stroke="#160404" stroke-width="1.500"/></svg><span>utbppriv</span></div>
<div class="it" style="left:659px;top:508px"><svg class="ic" width="19" height="15" viewBox="0 0 19 15"><path d="M1 0h16v1h2v13h-2v1H1v-1H0V1h1z" fill="#000"/><rect x="1" y="1" width="16" height="13" fill="#f9ee98"/><path d="M1 5.800L3.200 7.400L6.400 11.300L12.900 5L14.500 3.700L17 6.300M14.500 2.300V4" fill="none" stroke="#160404" stroke-width="1.500"/></svg><span>vabppriv</span></div>
<div class="it" style="left:659px;top:528px"><svg class="ic" width="19" height="15" viewBox="0 0 19 15"><path d="M1 0h16v1h2v13h-2v1H1v-1H0V1h1z" fill="#000"/><rect x="1" y="1" width="16" height="13" fill="#f9ee98"/><path d="M1 5.800L3.200 7.400L6.400 11.300L12.900 5L14.500 3.700L17 6.300M14.500 2.300V4" fill="none" stroke="#160404" stroke-width="1.500"/></svg><span>vtbppriv</span></div>
<div class="it" style="left:659px;top:548px"><svg class="ic" width="19" height="15" viewBox="0 0 19 15"><path d="M1 0h16v1h2v13h-2v1H1v-1H0V1h1z" fill="#000"/><rect x="1" y="1" width="16" height="13" fill="#f9ee98"/><path d="M1 5.800L3.200 7.400L6.400 11.300L12.900 5L14.500 3.700L17 6.300M14.500 2.300V4" fill="none" stroke="#160404" stroke-width="1.500"/></svg><span>wabppriv</span></div>
<div class="it" style="left:659px;top:568px"><svg class="ic" width="19" height="15" viewBox="0 0 19 15"><path d="M1 0h16v1h2v13h-2v1H1v-1H0V1h1z" fill="#000"/><rect x="1" y="1" width="16" height="13" fill="#f9ee98"/><path d="M1 5.800L3.200 7.400L6.400 11.300L12.900 5L14.500 3.700L17 6.300M14.500 2.300V4" fill="none" stroke="#160404" stroke-width="1.500"/></svg><span>wibppriv</span></div>
<div class="it" style="left:659px;top:588px"><svg class="ic" width="19" height="15" viewBox="0 0 19 15"><path d="M1 0h16v1h2v13h-2v1H1v-1H0V1h1z" fill="#000"/><rect x="1" y="1" width="16" height="13" fill="#f9ee98"/><path d="M1 5.800L3.200 7.400L6.400 11.300L12.900 5L14.500 3.700L17 6.300M14.500 2.300V4" fill="none" stroke="#160404" stroke-width="1.500"/></svg><span>wvbppriv</span></div>
<div class="it" style="left:659px;top:608px"><svg class="ic" width="19" height="15" viewBox="0 0 19 15"><path d="M1 0h16v1h2v13h-2v1H1v-1H0V1h1z" fill="#000"/><rect x="1" y="1" width="16" height="13" fill="#f9ee98"/><path d="M1 5.800L3.200 7.400L6.400 11.300L12.900 5L14.500 3.700L17 6.300M14.500 2.300V4" fill="none" stroke="#160404" stroke-width="1.500"/></svg><span>wybppriv</span></div>
<div class="it sel" style="left:659px;top:628px"><svg class="ic" width="19" height="15" viewBox="0 0 19 15"><path d="M1 0h16v1h2v13h-2v1H1v-1H0V1h1z" fill="#000"/><rect x="1" y="1" width="16" height="13" fill="#f9ee98"/><path d="M1 5.800L3.200 7.400L6.400 11.300L12.900 5L14.500 3.700L17 6.300M14.500 2.300V4" fill="none" stroke="#160404" stroke-width="1.500"/></svg><span>y</span></div>
</div></div>

<!-- tab bar -->
<svg class="abs" style="left:213px;top:656px" width="660" height="29" viewBox="213 656 660 29">
<rect x="213" y="659" width="34" height="25" fill="#f0f0f0"/>
<rect x="247" y="658" width="218" height="26" fill="#c5dbe3"/>
<rect x="467" y="658" width="406" height="26" fill="#f0f0f0"/>
<path d="M428.500 683.500L436 657.500H464.500V683.500z" fill="#e3eef3" stroke="#65879a"/>
<path d="M255.500 683.500L247.500 657.500H338.500L330.500 683.500z" fill="#e3eef3" stroke="#65879a"/>
<path d="M331 656L338.500 683.500H428.500L436 656z" fill="#c5dbe3"/>
<path d="M331 656L338.500 683.500H428.500L436 656z" fill="#fff"/>
<path d="M330.500 683.500L334.500 671L338.500 683.500z" fill="#c5dbe3"/>
<path d="M428.500 683.500L432.500 671L436.500 683.500z" fill="#c5dbe3"/>
<path d="M330.500 683.500L334.500 671M428.500 683.500L432.500 671M436.500 683.500L432.500 671" fill="none" stroke="#65879a"/>
<path d="M331 657.500L338.500 683.500H428.500L436 657.500" fill="none" stroke="#65879a"/>
<path d="M467 657.500H873" stroke="#9bb9c9"/>
<path d="M255 683.500H464" stroke="#65879a"/>
<rect x="464.500" y="657.500" width="3" height="26" fill="#e6eff6" stroke="#8c8c8c"/>
<rect x="494" y="666" width="26" height="11" fill="#888"/>
</svg>
<div class="tab" style="left:263px;top:660px;color:#1a1a1a;letter-spacing:.68px">Untitled</div>
<div class="tab" style="left:347px;top:660px;font-weight:bold;letter-spacing:.55px">Untitled1</div>
<div class="abs" style="left:440px;top:660px;width:24px;height:22px;overflow:hidden"><div class="tab" style="left:5px;top:0;color:#1a1a1a;letter-spacing:.68px">New Page</div></div>
</body></html>
